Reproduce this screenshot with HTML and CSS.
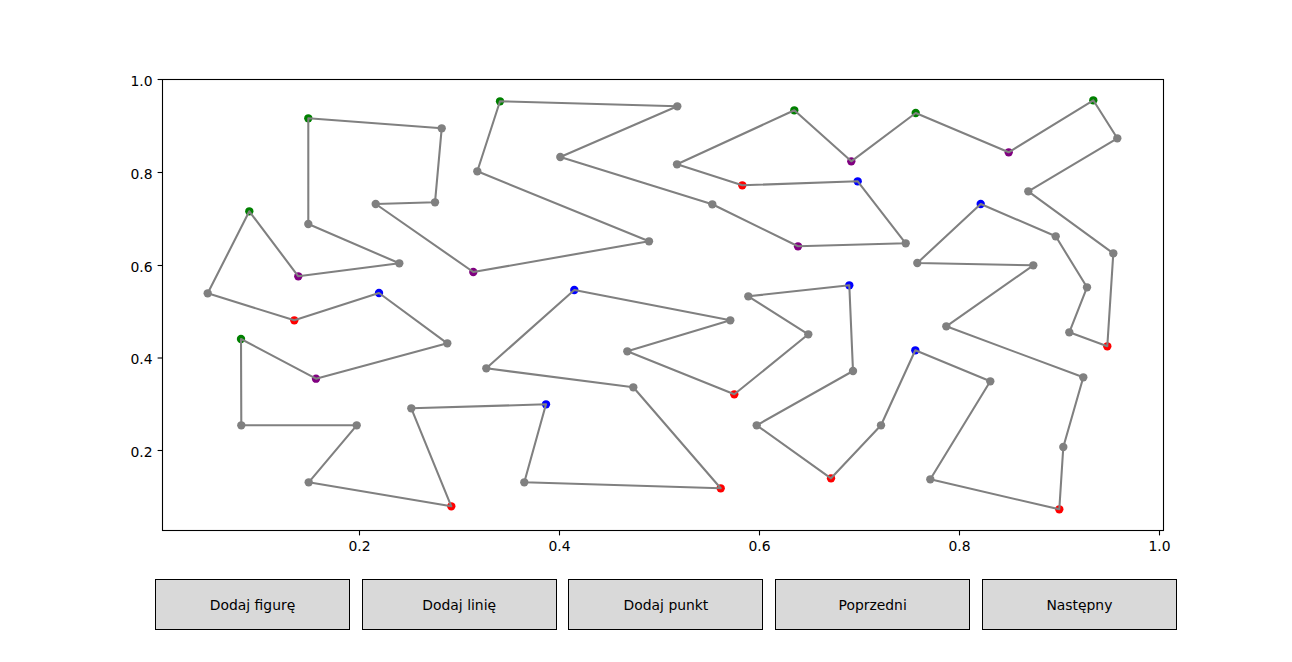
FILE: index.html
```html
<!DOCTYPE html>
<html lang="pl">
<head>
<meta charset="utf-8">
<title>Figure</title>
<link rel="stylesheet" href="styles.css">
</head>
<body>
<div class="figure">
  <svg class="plot" width="1292" height="579" viewBox="0 0 1292 579" xmlns="http://www.w3.org/2000/svg">
    <rect class="axes-bg" x="162.5" y="79.5" width="1001" height="451"/>
    <g class="dots">
      <circle class="g" cx="308.3" cy="118.3" r="4.17"/>
      <circle class="n" cx="441.7" cy="128.3" r="4.17"/>
      <circle class="n" cx="435" cy="202.3" r="4.17"/>
      <circle class="n" cx="375.7" cy="204" r="4.17"/>
      <circle class="p" cx="473.3" cy="272" r="4.17"/>
      <circle class="n" cx="649" cy="241.3" r="4.17"/>
      <circle class="n" cx="477.3" cy="171.3" r="4.17"/>
      <circle class="g" cx="500" cy="101.3" r="4.17"/>
      <circle class="n" cx="677.3" cy="106.3" r="4.17"/>
      <circle class="n" cx="560.3" cy="157" r="4.17"/>
      <circle class="n" cx="712.3" cy="204.3" r="4.17"/>
      <circle class="p" cx="798" cy="246.3" r="4.17"/>
      <circle class="n" cx="905.7" cy="243.3" r="4.17"/>
      <circle class="b" cx="857.7" cy="181.3" r="4.17"/>
      <circle class="r" cx="742.3" cy="185.3" r="4.17"/>
      <circle class="n" cx="677" cy="164.3" r="4.17"/>
      <circle class="g" cx="794.3" cy="110.3" r="4.17"/>
      <circle class="p" cx="851.3" cy="161.3" r="4.17"/>
      <circle class="g" cx="915.7" cy="113" r="4.17"/>
      <circle class="p" cx="1008.7" cy="152.3" r="4.17"/>
      <circle class="g" cx="1093.3" cy="100.3" r="4.17"/>
      <circle class="n" cx="1117.3" cy="138.3" r="4.17"/>
      <circle class="n" cx="1028.3" cy="191.3" r="4.17"/>
      <circle class="n" cx="1113.3" cy="253.3" r="4.17"/>
      <circle class="r" cx="1107.3" cy="346.3" r="4.17"/>
      <circle class="n" cx="1069.3" cy="332.3" r="4.17"/>
      <circle class="n" cx="1087" cy="287.3" r="4.17"/>
      <circle class="n" cx="1055.7" cy="236.3" r="4.17"/>
      <circle class="b" cx="980.7" cy="204" r="4.17"/>
      <circle class="n" cx="917.3" cy="263" r="4.17"/>
      <circle class="n" cx="1033.3" cy="265.3" r="4.17"/>
      <circle class="n" cx="946.3" cy="326.3" r="4.17"/>
      <circle class="n" cx="1083.3" cy="377.3" r="4.17"/>
      <circle class="n" cx="1063.3" cy="447" r="4.17"/>
      <circle class="r" cx="1059.3" cy="509.3" r="4.17"/>
      <circle class="n" cx="930.3" cy="479.3" r="4.17"/>
      <circle class="n" cx="990.3" cy="381.3" r="4.17"/>
      <circle class="b" cx="915.3" cy="350.3" r="4.17"/>
      <circle class="n" cx="881" cy="425.3" r="4.17"/>
      <circle class="r" cx="831" cy="478.3" r="4.17"/>
      <circle class="n" cx="756.7" cy="425.3" r="4.17"/>
      <circle class="n" cx="853" cy="371" r="4.17"/>
      <circle class="b" cx="849.3" cy="285.3" r="4.17"/>
      <circle class="n" cx="748.3" cy="296.3" r="4.17"/>
      <circle class="n" cx="808.3" cy="334.3" r="4.17"/>
      <circle class="r" cx="734.3" cy="394.3" r="4.17"/>
      <circle class="n" cx="627.3" cy="351.3" r="4.17"/>
      <circle class="n" cx="730.3" cy="320.3" r="4.17"/>
      <circle class="b" cx="574.3" cy="290" r="4.17"/>
      <circle class="n" cx="486.3" cy="368.3" r="4.17"/>
      <circle class="n" cx="633.3" cy="387.3" r="4.17"/>
      <circle class="r" cx="720.7" cy="488.3" r="4.17"/>
      <circle class="n" cx="524.3" cy="482.3" r="4.17"/>
      <circle class="b" cx="546" cy="404.3" r="4.17"/>
      <circle class="n" cx="411.3" cy="408.3" r="4.17"/>
      <circle class="r" cx="451.3" cy="506.3" r="4.17"/>
      <circle class="n" cx="308.7" cy="482.3" r="4.17"/>
      <circle class="n" cx="356.7" cy="425.3" r="4.17"/>
      <circle class="n" cx="241.3" cy="425.3" r="4.17"/>
      <circle class="g" cx="241" cy="339" r="4.17"/>
      <circle class="p" cx="316" cy="378.7" r="4.17"/>
      <circle class="n" cx="447.3" cy="343.3" r="4.17"/>
      <circle class="b" cx="379" cy="293" r="4.17"/>
      <circle class="r" cx="294.3" cy="320.3" r="4.17"/>
      <circle class="n" cx="207.7" cy="293.3" r="4.17"/>
      <circle class="g" cx="249.3" cy="211.3" r="4.17"/>
      <circle class="p" cx="298.3" cy="276.3" r="4.17"/>
      <circle class="n" cx="399.3" cy="263.3" r="4.17"/>
      <circle class="n" cx="308.3" cy="224" r="4.17"/>
    </g>
    <polygon class="tour" points="308.3,118.3 441.7,128.3 435,202.3 375.7,204 473.3,272 649,241.3 477.3,171.3 500,101.3 677.3,106.3 560.3,157 712.3,204.3 798,246.3 905.7,243.3 857.7,181.3 742.3,185.3 677,164.3 794.3,110.3 851.3,161.3 915.7,113 1008.7,152.3 1093.3,100.3 1117.3,138.3 1028.3,191.3 1113.3,253.3 1107.3,346.3 1069.3,332.3 1087,287.3 1055.7,236.3 980.7,204 917.3,263 1033.3,265.3 946.3,326.3 1083.3,377.3 1063.3,447 1059.3,509.3 930.3,479.3 990.3,381.3 915.3,350.3 881,425.3 831,478.3 756.7,425.3 853,371 849.3,285.3 748.3,296.3 808.3,334.3 734.3,394.3 627.3,351.3 730.3,320.3 574.3,290 486.3,368.3 633.3,387.3 720.7,488.3 524.3,482.3 546,404.3 411.3,408.3 451.3,506.3 308.7,482.3 356.7,425.3 241.3,425.3 241,339 316,378.7 447.3,343.3 379,293 294.3,320.3 207.7,293.3 249.3,211.3 298.3,276.3 399.3,263.3 308.3,224"/>
    <rect class="spines" x="162.5" y="79.5" width="1001" height="451"/>
    <g class="ticks">
      <line x1="359.5" y1="530.5" x2="359.5" y2="535.4"/>
      <line x1="559.5" y1="530.5" x2="559.5" y2="535.4"/>
      <line x1="759.5" y1="530.5" x2="759.5" y2="535.4"/>
      <line x1="959.5" y1="530.5" x2="959.5" y2="535.4"/>
      <line x1="1159.5" y1="530.5" x2="1159.5" y2="535.4"/>
      <line x1="157.6" y1="79.5" x2="162.5" y2="79.5"/>
      <line x1="157.6" y1="172.5" x2="162.5" y2="172.5"/>
      <line x1="157.6" y1="265.5" x2="162.5" y2="265.5"/>
      <line x1="157.6" y1="358" x2="162.5" y2="358"/>
      <line x1="157.6" y1="450.5" x2="162.5" y2="450.5"/>
    </g>
    <g class="xlabels">
      <text x="359.5" y="550.5">0.2</text>
      <text x="559.5" y="550.5">0.4</text>
      <text x="759.5" y="550.5">0.6</text>
      <text x="959.5" y="550.5">0.8</text>
      <text x="1159.5" y="550.5">1.0</text>
    </g>
    <g class="ylabels">
      <text x="152.5" y="85.5">1.0</text>
      <text x="152.5" y="178.5">0.8</text>
      <text x="152.5" y="271.5">0.6</text>
      <text x="152.5" y="364">0.4</text>
      <text x="152.5" y="456.5">0.2</text>
    </g>
  </svg>
  <div class="buttons">
    <div class="btn">Dodaj figurę</div>
    <div class="btn">Dodaj linię</div>
    <div class="btn">Dodaj punkt</div>
    <div class="btn">Poprzedni</div>
    <div class="btn">Następny</div>
  </div>
</div>
</body>
</html>
```

FILE: styles.css
```css
html, body {
  margin: 0;
  padding: 0;
  background: #ffffff;
}

body {
  width: 1292px;
  height: 662px;
  overflow: hidden;
  font-family: "DejaVu Sans", "Liberation Sans", sans-serif;
}

.figure {
  display: flex;
  flex-direction: column;
  width: 1292px;
  height: 662px;
}

.plot {
  display: block;
  flex: none;
}

.axes-bg {
  fill: #ffffff;
  stroke: none;
}

.spines {
  fill: none;
  stroke: #000000;
  stroke-width: 1.1;
}

.ticks line {
  stroke: #000000;
  stroke-width: 1.1;
}

.dots circle { stroke: none; }
.dots .n { fill: #808080; }
.dots .g { fill: #008000; }
.dots .p { fill: #800080; }
.dots .r { fill: #ff0000; }
.dots .b { fill: #0000ff; }

.tour {
  fill: none;
  stroke: #808080;
  stroke-width: 2.08;
  stroke-linejoin: round;
}

.xlabels text,
.ylabels text {
  font-family: "DejaVu Sans", sans-serif;
  font-size: 13.9px;
  fill: #000000;
}

.xlabels text { text-anchor: middle; }
.ylabels text { text-anchor: end; }

.buttons {
  display: flex;
  gap: 11.72px;
  padding-left: 155px;
}

.btn {
  box-sizing: border-box;
  width: 195px;
  height: 51px;
  border: 1px solid #000000;
  background: #d9d9d9;
  display: flex;
  align-items: center;
  justify-content: center;
  font-family: "DejaVu Sans", sans-serif;
  font-size: 13.9px;
  color: #000000;
}
```
